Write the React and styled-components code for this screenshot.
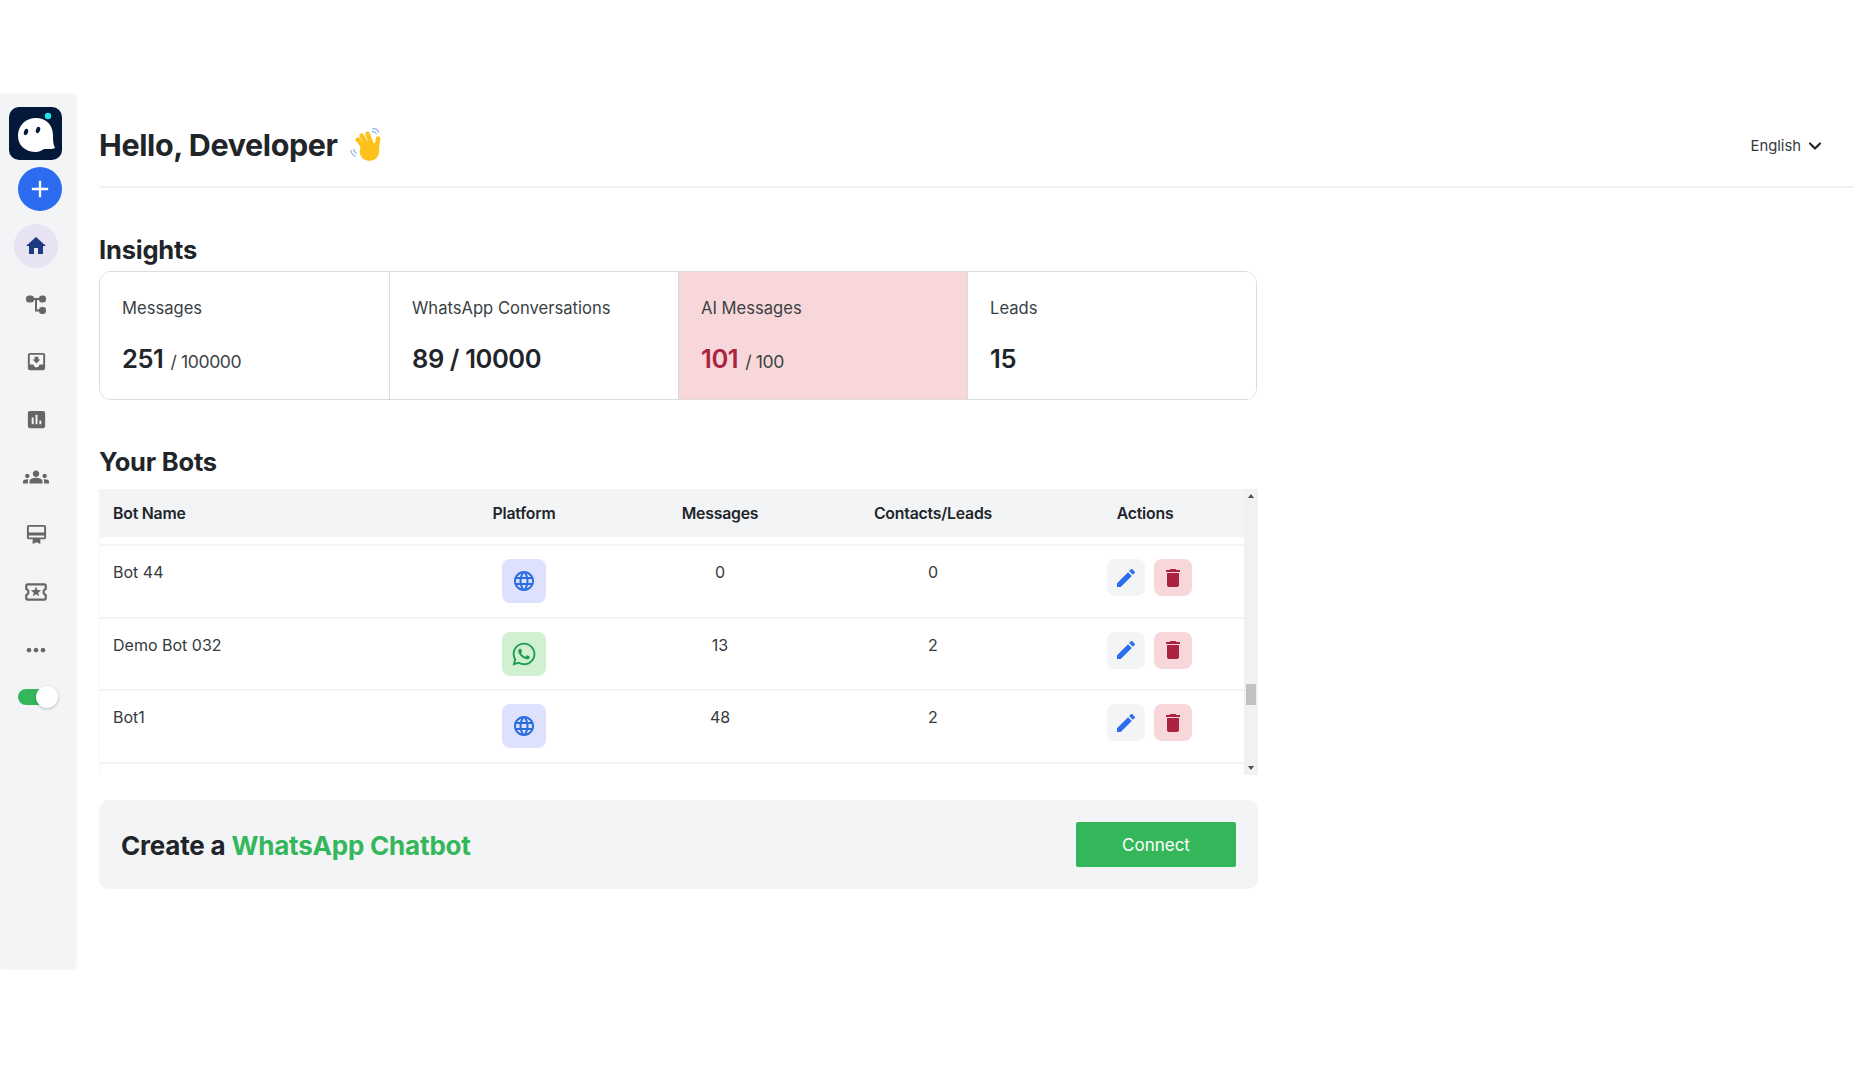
import React from 'react';
import styled, { createGlobalStyle } from 'styled-components';
import {
  MdHome,
  MdMoveToInbox,
  MdAssessment,
  MdGroups,
  MdCardMembership,
  MdOutlineLocalActivity,
  MdMoreHoriz,
  MdEdit,
  MdDelete,
  MdLanguage,
  MdAdd,
} from 'react-icons/md';
import { FaWhatsapp } from 'react-icons/fa';
import { ChevronDown } from 'lucide-react';

const GlobalStyle = createGlobalStyle`
  html, body {
    margin: 0;
    background: #fff;
    color: #212529;
    font-family: Inter, "Noto Sans", sans-serif;
  }
  * { box-sizing: border-box; }
`;

const Page = styled.div`
  display: flex;
  align-items: flex-start;
  width: 1866px;
  height: 1080px;
  padding-top: 94px;
  overflow: hidden;
`;

const SideBar = styled.aside`
  flex: none;
  display: flex;
  flex-direction: column;
  width: 74px;
  height: 875px;
  padding-top: 13px;
  background: #f3f4f6;
  box-shadow: 2px 0 3px rgba(0, 0, 0, 0.06);
`;

const Logo = styled.div`
  width: 53px;
  height: 53px;
  margin-left: 9px;
  border-radius: 10px;
  background: #04183a;
  display: flex;
`;

const AddButton = styled.button`
  width: 44px;
  height: 44px;
  margin: 7px 0 13px 18px;
  padding: 0;
  border: 0;
  border-radius: 50%;
  background: #2b6cf0;
  color: #fff;
  display: flex;
  align-items: center;
  justify-content: center;
`;

const NavItem = styled.a`
  width: 44px;
  height: 44px;
  margin: 0 0 13.7px 14px;
  border-radius: 50%;
  display: flex;
  align-items: center;
  justify-content: center;
  color: ${(p) => (p.$active ? '#1c3a80' : '#666')};
  background: ${(p) => (p.$active ? '#e7e3f3' : 'transparent')};
`;

const Toggle = styled.div`
  position: relative;
  width: 32px;
  height: 16px;
  margin: 3px 0 0 18px;
  border-radius: 8px;
  background: #34b75a;
`;

const Knob = styled.span`
  position: absolute;
  top: -3px;
  right: -8px;
  width: 22px;
  height: 22px;
  border-radius: 50%;
  background: #fff;
  box-shadow: 0 1px 3px rgba(0, 0, 0, 0.25);
`;

const Main = styled.main`
  flex: none;
  width: 1778px;
  margin-left: 25px;
  min-width: 0;
`;

const TopBar = styled.header`
  display: flex;
  align-items: center;
  justify-content: space-between;
  height: 94px;
  padding: 9px 29px 0 0;
  border-bottom: 2px solid #f1f2f4;
  width: 1755px;
`;

const Greeting = styled.h1`
  display: flex;
  align-items: center;
  gap: 10px;
  margin: 0;
  font-size: 30.5px;
  font-weight: 700;
  letter-spacing: -0.4px;
`;

const Language = styled.div`
  display: flex;
  align-items: center;
  gap: 4px;
  margin-top: 2px;
  font-size: 14.8px;
  color: #343a40;
`;

const Content = styled.div`
  width: 1159px;
`;

const SectionTitle = styled.h2`
  margin: 0;
  font-size: 25.5px;
  line-height: 32px;
  font-weight: 700;
  letter-spacing: -0.2px;
  margin-top: ${(p) => p.$top}px;
  margin-bottom: ${(p) => p.$bottom}px;
`;

const InsightGrid = styled.div`
  display: grid;
  grid-template-columns: repeat(4, 1fr);
  width: 1158px;
  height: 129px;
  border: 1.5px solid #dcdcdc;
  border-radius: 12px;
  overflow: hidden;
`;

const Insight = styled.div`
  padding: 24px 22px 0;
  background: ${(p) => (p.$alert ? '#f8d7da' : '#fff')};
  & + & {
    border-left: 1.5px solid #dcdcdc;
  }
`;

const InsightLabel = styled.div`
  font-size: 16.6px;
  line-height: 24px;
  color: #3a3f44;
`;

const InsightValue = styled.div`
  margin-top: 22px;
  display: flex;
  align-items: baseline;
  gap: 7px;
  font-size: 25.5px;
  line-height: 34px;
  font-weight: 600;
  letter-spacing: -0.4px;
  color: ${(p) => (p.$alert ? '#ab2340' : '#212529')};
`;

const InsightTotal = styled.span`
  font-size: 17.6px;
  font-weight: 400;
  color: #3a3f44;
`;

const TableWrap = styled.div`
  display: flex;
  height: 286px;
  border-left: 1px solid #f3f4f6;
  overflow: hidden;
`;

const Table = styled.div`
  flex: 1;
  min-width: 0;
`;

const Row = styled.div`
  display: grid;
  grid-template-columns: 328px 192px 200px 226px 198px;
  justify-items: center;
  font-size: 16px;
`;

const HeadRow = styled(Row)`
  align-items: center;
  height: 48px;
  margin-bottom: 7px;
  background: #f3f4f6;
  font-weight: 600;
  font-size: 15.8px;
  letter-spacing: -0.2px;
`;

const BodyRow = styled(Row)`
  height: 72.7px;
  padding-top: 13px;
  border-top: 2px solid #f3f4f6;
  color: #343a40;
`;

const TableEnd = styled.div`
  border-top: 2px solid #f3f4f6;
`;

const NameCell = styled.div`
  justify-self: start;
  padding-left: 13px;
`;

const TextCell = styled.div`
  line-height: 26px;
`;

const PlatformTile = styled.div`
  width: 44px;
  height: 44px;
  border-radius: 8px;
  display: flex;
  align-items: center;
  justify-content: center;
  background: ${(p) => (p.$kind === 'whatsapp' ? '#d1f0d1' : '#dde1fd')};
  color: ${(p) => (p.$kind === 'whatsapp' ? '#1e9e50' : '#2b6cdf')};
`;

const Actions = styled.div`
  display: flex;
  gap: 9px;
  padding-left: 8px;
`;

const IconButton = styled.button`
  width: 38px;
  height: 37px;
  padding: 0;
  border: 0;
  border-radius: 8px;
  display: flex;
  align-items: center;
  justify-content: center;
  background: ${(p) => (p.$danger ? '#f8d7da' : '#f3f4f6')};
  color: ${(p) => (p.$danger ? '#ab2340' : '#2b6cf0')};
`;

const ScrollBar = styled.div`
  flex: none;
  position: relative;
  width: 14px;
  background: #f1f1f1;
`;

const Thumb = styled.div`
  position: absolute;
  top: 195px;
  left: 2px;
  width: 10px;
  height: 21px;
  background: #c1c1c1;
`;

const Arrow = styled.span`
  position: absolute;
  left: 4px;
  width: 0;
  height: 0;
  border-left: 3px solid transparent;
  border-right: 3px solid transparent;
  ${(p) =>
    p.$down
      ? 'bottom: 5px; border-top: 4px solid #505050;'
      : 'top: 5px; border-bottom: 4px solid #505050;'}
`;

const Banner = styled.section`
  display: flex;
  align-items: center;
  justify-content: space-between;
  height: 89px;
  margin-top: 25px;
  padding: 0 22px;
  border-radius: 10px;
  background: #f3f4f6;
`;

const BannerTitle = styled.h3`
  margin: 0;
  padding-top: 2px;
  font-size: 26px;
  font-weight: 700;
  letter-spacing: -0.2px;
`;

const Green = styled.span`
  color: #34b75a;
`;

const ConnectButton = styled.button`
  width: 160px;
  height: 45px;
  border: 0;
  border-radius: 2px;
  background: #34b75a;
  color: #fff;
  font-family: inherit;
  font-size: 17px;
`;

// ghost face on the dark tile
const LogoMark = () => (
  <svg viewBox="0 0 53 53" width="53" height="53">
    <path
      d="M27 11C16 11 9 19 9 29c0 10 8 16 18 16 3 0 5-1 7-2.500 3-1.500 8 .5 12-1.500-2-4-2-8-2-13C44 18 37 11 27 11z"
      fill="#fff"
    />
    <ellipse cx="17" cy="25" rx="2" ry="3.200" transform="rotate(20 17 25)" fill="#04183a" />
    <ellipse cx="29" cy="23" rx="2" ry="3.200" transform="rotate(20 29 23)" fill="#04183a" />
    <circle cx="39" cy="9" r="3.200" fill="#1fe6e6" />
  </svg>
);

// the waving hand emoji
const WaveHand = () => (
  <svg viewBox="0 0 36 36" width="35" height="35">
    <g stroke="#fcc21b" strokeWidth="4.800" strokeLinecap="round">
      <path d="M18 23L10 13" />
      <path d="M21 21L14 9" />
      <path d="M25 20L20 7" />
      <path d="M29 25L31 12" />
    </g>
    <ellipse cx="22" cy="25" rx="10" ry="10" fill="#fcc21b" />
    <g fill="none" stroke="#8fb3e8" strokeWidth="1.200" strokeLinecap="round">
      <path d="M25 5c1.500-.6 3 .2 4 1.800" />
      <path d="M25 2c2.500-.8 5 .4 6.500 3.500" />
      <path d="M6 23c0 1.800.8 3.200 2.500 4.200" />
      <path d="M3 24c.2 2.800 1.800 5 4.500 6" />
    </g>
  </svg>
);

// flow builder icon, rounded nodes joined by lines
const FlowIcon = () => (
  <svg viewBox="0 0 24 24" width="24" height="24" fill="currentColor">
    <rect x="2" y="3.500" width="8" height="7" rx="3" />
    <rect x="15" y="3.500" width="7" height="7" rx="3" />
    <rect x="15" y="15" width="7" height="7" rx="3" />
    <path d="M9 6h7v2h-3v9.500h3v2h-5V8H9z" />
  </svg>
);

const NAV_ICONS = [
  { Icon: FlowIcon },
  { Icon: MdMoveToInbox, size: 23 },
  { Icon: MdAssessment, size: 23 },
  { Icon: MdGroups, size: 26 },
  { Icon: MdCardMembership, size: 23 },
  { Icon: MdOutlineLocalActivity, size: 26 },
  { Icon: MdMoreHoriz, size: 28 },
];

const INSIGHTS = [
  { label: 'Messages', value: '251', total: '/ 100000' },
  { label: 'WhatsApp Conversations', value: '89 / 10000' },
  { label: 'AI Messages', value: '101', total: '/ 100', alert: true },
  { label: 'Leads', value: '15' },
];

const BOTS = [
  { name: 'Bot 44', kind: 'web', messages: 0, leads: 0 },
  { name: 'Demo Bot 032', kind: 'whatsapp', messages: 13, leads: 2 },
  { name: 'Bot1', kind: 'web', messages: 48, leads: 2 },
];

export default function App() {
  return (
    <>
      <GlobalStyle />
      <Page>
        <SideBar>
          <Logo>
            <LogoMark />
          </Logo>
          <AddButton aria-label="Add">
            <MdAdd size={28} />
          </AddButton>
          <NavItem $active>
            <MdHome size={24} />
          </NavItem>
          {NAV_ICONS.map(({ Icon, size }, i) => (
            <NavItem key={i}>
              <Icon size={size} />
            </NavItem>
          ))}
          <Toggle>
            <Knob />
          </Toggle>
        </SideBar>
        <Main>
          <TopBar>
            <Greeting>
              Hello, Developer <WaveHand />
            </Greeting>
            <Language>
              English <ChevronDown size={20} strokeWidth={2.6} color="#212529" />
            </Language>
          </TopBar>
          <Content>
            <SectionTitle $top={46} $bottom={5}>
              Insights
            </SectionTitle>
            <InsightGrid>
              {INSIGHTS.map((item) => (
                <Insight key={item.label} $alert={item.alert}>
                  <InsightLabel>{item.label}</InsightLabel>
                  <InsightValue $alert={item.alert}>
                    {item.value}
                    {item.total && <InsightTotal>{item.total}</InsightTotal>}
                  </InsightValue>
                </Insight>
              ))}
            </InsightGrid>
            <SectionTitle $top={46} $bottom={11}>
              Your Bots
            </SectionTitle>
            <TableWrap>
              <Table>
                <HeadRow>
                  <NameCell>Bot Name</NameCell>
                  <div>Platform</div>
                  <div>Messages</div>
                  <div>Contacts/Leads</div>
                  <div>Actions</div>
                </HeadRow>
                {BOTS.map((bot) => (
                  <BodyRow key={bot.name}>
                    <NameCell>
                      <TextCell>{bot.name}</TextCell>
                    </NameCell>
                    <PlatformTile $kind={bot.kind}>
                      {bot.kind === 'whatsapp' ? <FaWhatsapp size={26} /> : <MdLanguage size={24} />}
                    </PlatformTile>
                    <TextCell>{bot.messages}</TextCell>
                    <TextCell>{bot.leads}</TextCell>
                    <Actions>
                      <IconButton aria-label="Edit">
                        <MdEdit size={24} />
                      </IconButton>
                      <IconButton $danger aria-label="Delete">
                        <MdDelete size={24} />
                      </IconButton>
                    </Actions>
                  </BodyRow>
                ))}
                <TableEnd />
              </Table>
              <ScrollBar>
                <Arrow />
                <Thumb />
                <Arrow $down />
              </ScrollBar>
            </TableWrap>
            <Banner>
              <BannerTitle>
                Create a <Green>WhatsApp Chatbot</Green>
              </BannerTitle>
              <ConnectButton>Connect</ConnectButton>
            </Banner>
          </Content>
        </Main>
      </Page>
    </>
  );
}
